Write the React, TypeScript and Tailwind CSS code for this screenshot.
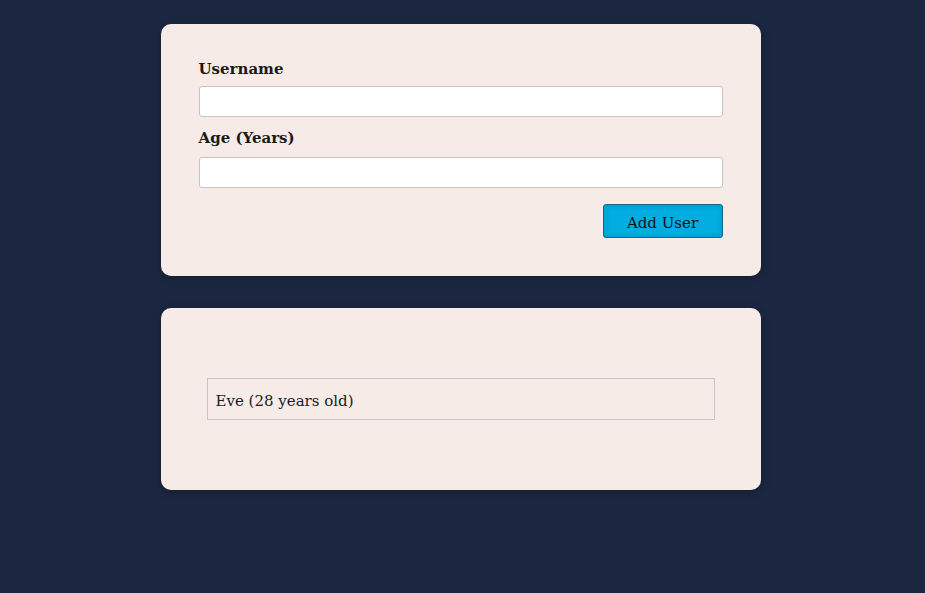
import { useState } from "react";

interface User {
  name: string;
  age: number;
}

export default function App() {
  const [users] = useState<User[]>([{ name: "Eve", age: 28 }]);

  return (
    <div className="min-h-[593px] bg-[#1b2740] pt-6 pr-[4px] font-['DejaVu_Serif',serif]">
      <div className="mx-auto w-[600px] rounded-[10px] bg-[#f6ebe7] px-[38px] pt-[33px] pb-[38px] shadow-[0_2px_8px_rgba(0,0,0,0.26)]">
        <form className="flex flex-col" onSubmit={(e) => e.preventDefault()}>
          <label className="mb-[5px] text-[15px] font-bold leading-[24px] text-[#1a1a1a]">Username</label>
          <input className="h-[31px] w-full rounded-[3px] border border-[#c9c2c0] bg-white px-2" type="text" />
          <label className="mt-[9px] mb-[7px] text-[15px] font-bold leading-[24px] text-[#1a1a1a]">Age (Years)</label>
          <input className="h-[31px] w-full rounded-[3px] border border-[#c9c2c0] bg-white px-2" type="number" />
          <div className="mt-4 flex justify-end">
            <button className="h-[34px] w-[120px] rounded-[3px] border border-[#0e6b8a] bg-[#02ade2] pt-[4px] text-[15px] text-[#111] shadow-[inset_0_0_6px_rgba(0,0,0,0.15)]">
              Add User
            </button>
          </div>
        </form>
      </div>

      <div className="mx-auto mt-8 w-[600px] rounded-[10px] bg-[#f6ebe7] px-[46px] pt-[70px] pb-[70px] shadow-[0_2px_8px_rgba(0,0,0,0.26)]">
        <ul>
          {users.map((u) => (
            <li key={u.name} className="flex h-[42px] items-center border border-[#cbc6c4] px-2 pt-[5px] text-[15px] text-[#1a1a2a]">
              {u.name} ({u.age} years old)
            </li>
          ))}
        </ul>
      </div>
    </div>
  );
}
